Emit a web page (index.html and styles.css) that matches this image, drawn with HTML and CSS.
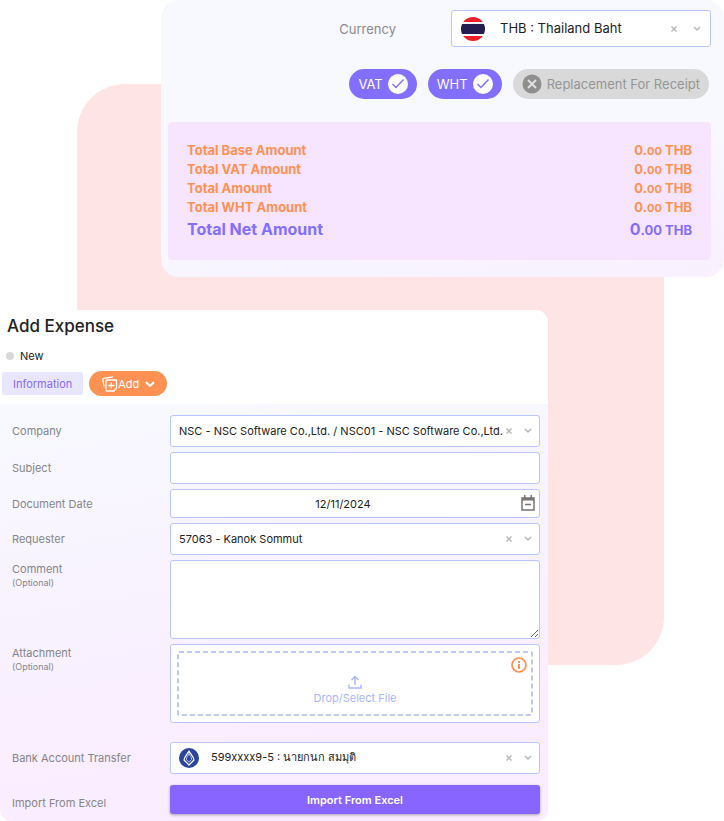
FILE: index.html
```html
<!DOCTYPE html>
<html lang="en">
<head>
<meta charset="utf-8">
<meta name="viewport" content="width=device-width, initial-scale=1">
<title>Add Expense</title>
<link rel="stylesheet" href="styles.css">
</head>
<body>
<main class="stage">
  <div class="backdrop"></div>

  <section class="summary">
    <div class="currency">
      <label class="currency-label" for="currency">Currency</label>
      <div class="picker picker-large">
        <svg class="picker-icon" viewBox="0 0 24 24" aria-hidden="true">
          <defs><clipPath id="round"><circle cx="12" cy="12" r="12"/></clipPath></defs>
          <g clip-path="url(#round)">
            <rect width="24" height="24" fill="#f7f7fa"/>
            <rect width="24" height="5" fill="#ee2027"/>
            <rect y="7" width="24" height="10" fill="#241d4f"/>
            <rect y="19" width="24" height="5" fill="#ee2027"/>
          </g>
        </svg>
        <select class="control" id="currency"><option>THB : Thailand Baht</option></select>
        <button class="clear" type="button" aria-label="Clear currency"><svg viewBox="0 0 6 6"><path d="M.5.5l5 5M5.500.500l-5 5"/></svg></button>
        <svg class="chevron" viewBox="0 0 8 6" aria-hidden="true"><path d="M1 1l3 3 3-3"/></svg>
      </div>
    </div>

    <div class="toggles">
      <button class="toggle" type="button" aria-pressed="true">VAT
        <svg viewBox="0 0 20 20" aria-hidden="true"><circle cx="10" cy="10" r="10" fill="#fff"/><path d="M4.500 10l3.500 3.500 7.500-8" fill="none" stroke="#836fff" stroke-width="1.500"/></svg>
      </button>
      <button class="toggle" type="button" aria-pressed="true">WHT
        <svg viewBox="0 0 20 20" aria-hidden="true"><circle cx="10" cy="10" r="10" fill="#fff"/><path d="M4.500 10l3.500 3.500 7.500-8" fill="none" stroke="#836fff" stroke-width="1.500"/></svg>
      </button>
      <button class="toggle toggle-off" type="button" aria-pressed="false">
        <svg viewBox="0 0 20 20" aria-hidden="true"><circle cx="10" cy="10" r="9.500" fill="#8f8f8f"/><path d="M6 6l8 8M14 6l-8 8" fill="none" stroke="#e4e4e4" stroke-width="1.800"/></svg>
        Replacement For Receipt
      </button>
    </div>

    <dl class="totals">
      <div class="total"><dt>Total Base Amount</dt><dd>0.<small>00</small> THB</dd></div>
      <div class="total"><dt>Total VAT Amount</dt><dd>0.<small>00</small> THB</dd></div>
      <div class="total"><dt>Total Amount</dt><dd>0.<small>00</small> THB</dd></div>
      <div class="total"><dt>Total WHT Amount</dt><dd>0.<small>00</small> THB</dd></div>
      <div class="total net"><dt>Total Net Amount</dt><dd>0<small>.00 THB</small></dd></div>
    </dl>
  </section>

  <section class="expense">
    <header class="head">
      <h1>Add Expense</h1>
      <p class="status">New</p>
      <div class="tabs">
        <button class="tab" type="button">Information</button>
        <button class="add" type="button">
          <svg class="add-icon" viewBox="0 0 16 16" aria-hidden="true"><path d="M5 4h9.500v8L12 15H5c-.7 0-1-.4-1-1V5c0-.6.3-1 1-1zM9.300 6.500v6M6.300 9.500h6M2 10.500L.8 3.500c-.1-.7.200-1.100.8-1.200L11 .8"/></svg>
          Add
          <svg class="add-arrow" viewBox="0 0 10 6" aria-hidden="true"><path d="M1 1l4 4 4-4"/></svg>
        </button>
      </div>
    </header>

    <form class="form">
      <div class="row">
        <label for="company">Company</label>
        <div class="picker">
          <select class="control" id="company"><option>NSC - NSC Software Co.,Ltd. / NSC01 - NSC Software Co.,Ltd.</option></select>
          <button class="clear" type="button" aria-label="Clear company"><svg viewBox="0 0 6 6"><path d="M.5.5l5 5M5.500.500l-5 5"/></svg></button>
          <svg class="chevron" viewBox="0 0 8 6" aria-hidden="true"><path d="M1 1l3 3 3-3"/></svg>
        </div>
      </div>
      <div class="row">
        <label for="subject">Subject</label>
        <input class="control" id="subject" type="text">
      </div>
      <div class="row">
        <label for="date">Document Date</label>
        <div class="date">
          <input class="control" id="date" type="text" value="12/11/2024">
          <button class="calendar" type="button" aria-label="Open calendar">
            <svg viewBox="0 0 14 16"><path d="M1 3h12v12H1z" fill="none" stroke="#77736f" stroke-width="1.500"/><path d="M1 3h12v2.500H1zM3 0h1.500v3H3zM9.500 0H11v3H9.500z" fill="#77736f"/><path d="M4 9.500h6" stroke="#77736f" stroke-width="1.500"/></svg>
          </button>
        </div>
      </div>
      <div class="row">
        <label for="requester">Requester</label>
        <div class="picker">
          <select class="control" id="requester"><option>57063 - Kanok Sommut</option></select>
          <button class="clear" type="button" aria-label="Clear requester"><svg viewBox="0 0 6 6"><path d="M.5.5l5 5M5.500.500l-5 5"/></svg></button>
          <svg class="chevron" viewBox="0 0 8 6" aria-hidden="true"><path d="M1 1l3 3 3-3"/></svg>
        </div>
      </div>
      <div class="row row-tall">
        <label for="comment">Comment<small>(Optional)</small></label>
        <textarea class="control" id="comment"></textarea>
      </div>
      <div class="row row-tall">
        <label for="file">Attachment<small>(Optional)</small></label>
        <div class="attach">
          <label class="drop" for="file">
            <svg class="dashes" aria-hidden="true"><rect x="1" y="1" rx="1"/></svg>
            <svg class="upload" viewBox="0 0 14 14" aria-hidden="true"><path d="M7 10V2M3.500 5L7 1.500 10.500 5M1 9.500V13h12V9.500"/></svg>
            Drop/Select File
          </label>
          <input class="file" id="file" type="file">
          <button class="info" type="button" aria-label="Attachment information">
            <svg viewBox="0 0 16 16"><circle cx="8" cy="8" r="7" fill="none" stroke="#ff9152" stroke-width="1.700"/><path d="M7 7h2v5H7zM7 4h2v2H7z" fill="#ff9152"/></svg>
          </button>
        </div>
      </div>
      <div class="row row-bank">
        <label for="bank">Bank Account Transfer</label>
        <div class="picker picker-bank">
          <svg class="picker-icon" viewBox="0 0 20 20" aria-hidden="true"><circle cx="10" cy="10" r="10" fill="#2b459c"/><path d="M10 3C8.500 6 5.500 8.500 5 12l5 5 5-5c-.5-3.500-3.500-6-5-9z" fill="none" stroke="#fff" stroke-width="1.200" stroke-linejoin="round"/><path d="M10 5.500C9 8 7.500 9 7.300 11.300L10 14.300l2.700-3C12.500 9 11 8 10 5.500z" fill="none" stroke="#dfe5f7" stroke-width=".8"/></svg>
          <select class="control" id="bank"><option>599xxxx9-5 : นายกนก สมมุติ</option></select>
          <button class="clear" type="button" aria-label="Clear bank account"><svg viewBox="0 0 6 6"><path d="M.5.5l5 5M5.500.500l-5 5"/></svg></button>
          <svg class="chevron" viewBox="0 0 8 6" aria-hidden="true"><path d="M1 1l3 3 3-3"/></svg>
        </div>
      </div>
      <div class="row row-import">
        <label for="import">Import From Excel</label>
        <button class="import" id="import" type="button">Import From Excel</button>
      </div>
    </form>
  </section>
</main>
</body>
</html>
```

FILE: styles.css
```css
* { box-sizing: border-box; }

body {
  margin: 0;
  background: #fff;
  color: #222;
  font: 11px/16px Inter, "Noto Sans", sans-serif;
}

button, input, select, textarea { font: inherit; color: inherit; }
button { border: 0; padding: 0; background: none; cursor: pointer; }

.stage {
  position: relative;
  display: flex;
  flex-direction: column;
  gap: 33px;
}

.backdrop {
  position: absolute;
  inset: 84px 60px 156px 77px;
  border-radius: 48px;
  background: #ffe4e5;
}

/* Amount summary */
.summary {
  position: relative;
  margin-left: 161px;
  padding: 10px 13px 17px 7px;
  border-radius: 18px;
  background: linear-gradient(170deg, #f8f9ff 55%, #f7f4ff 80%, #faf0ff);
}

.currency {
  display: flex;
  justify-content: flex-end;
  align-items: center;
  gap: 55px;
}

.currency-label { color: #8b8b8f; font-size: 13px; }

.toggles {
  display: flex;
  justify-content: flex-end;
  gap: 11px;
  margin: 22px 2px 23px 0;
}

.toggle {
  display: flex;
  align-items: center;
  gap: 5px;
  height: 30px;
  padding: 0 9px;
  border-radius: 15px;
  background: #836fff;
  color: #fff;
  font-size: 13px;
}

.toggle svg { width: 20px; height: 20px; }
.toggle-off { background: #d9d9d9; color: #959595; }

.totals {
  margin: 0;
  padding: 19px;
  border-radius: 4px;
  background: #f7e5ff;
  color: #ff9152;
  font-size: 13px;
  font-weight: 700;
  line-height: 19px;
}

.total { display: flex; justify-content: space-between; }
.total dd { margin: 0; }
.total small { font-size: 11px; line-height: 1; }
.net { color: #836fff; font-size: 16px; line-height: 24px; }
.total.net small { font-size: 13px; }

/* Select with clear button and chevron */
.control {
  display: block;
  width: 100%;
  height: 32px;
  padding: 0 8px;
  border: 1px solid #b9c5ff;
  border-radius: 3px;
  background: #fff;
  outline: 0;
  appearance: none;
}

.picker { position: relative; }
.picker .control { padding-right: 34px; }
.picker-large { width: 260px; }
.picker-large .control { height: 37px; padding-left: 48px; padding-bottom: 2px; font-size: 13px; }
.picker-bank .control { padding-left: 40px; padding-bottom: 2px; }
.picker-icon { position: absolute; left: 9px; top: 6px; width: 20px; height: 20px; }
.picker-large .picker-icon { left: 10px; top: 7px; width: 24px; height: 24px; }

.clear {
  position: absolute;
  right: 28px;
  top: calc(50% - 3px);
  width: 6px;
  height: 6px;
}

.clear svg { display: block; }
.chevron {
  position: absolute;
  right: 8px;
  top: calc(50% - 3px);
  width: 8px;
  height: 6px;
}
.picker-large .clear { right: 34px; }
.picker-large .chevron { right: 10px; }
.clear path, .chevron path { fill: none; stroke: #b8b8b8; stroke-width: 1.5; }

/* Expense form */
.expense {
  position: relative;
  margin-right: 176px;
  border-radius: 0 12px 12px 12px;
  background: #fff;
  overflow: hidden;
}

.head { padding: 5px 2px 8px; }
h1 { margin: 0 5px; font-size: 17px; line-height: 22px; font-weight: 500; }

.status {
  display: flex;
  align-items: center;
  gap: 6px;
  margin: 11px 4px 7px;
}

.status::before {
  content: "";
  width: 8px;
  height: 8px;
  border-radius: 50%;
  background: #d9d9d9;
}

.tabs { display: flex; align-items: center; gap: 6px; }

.tab {
  height: 23px;
  padding: 0 11px;
  border-radius: 2px;
  background: #e9e7ff;
  color: #8b68ff;
}

.add {
  display: flex;
  align-items: center;
  height: 25px;
  padding: 0 12px 0 13px;
  border-radius: 13px;
  background: #ff9152;
  color: #fff;
}

.add-icon { width: 16px; height: 16px; }
.add-icon path { fill: none; stroke: #fff; stroke-width: 1.3; stroke-linejoin: round; }
.add-arrow { width: 10px; height: 6px; margin-left: 6px; }
.add-arrow path { fill: none; stroke: #fff; stroke-width: 2; }

.form {
  display: flex;
  flex-direction: column;
  gap: 5px;
  padding: 11px 8px 7px 12px;
  background: linear-gradient(170deg, #f8f9ff, #f8f3ff 40%, #faedff 75%);
}

.row {
  display: grid;
  grid-template-columns: 158px 1fr;
  align-items: center;
}

.row > label { color: #858589; }
.row small { display: block; font-size: 9px; line-height: 12px; }
.row-tall { align-items: start; }
.row-tall > label { padding-top: 1px; }
.row-bank { margin-top: 14px; }
.row-import { margin-top: 6px; }
.row-import > label { padding-top: 6px; }

textarea.control { height: 79px; resize: vertical; }

.date { position: relative; }
.date .control { height: 29px; padding: 0 32px 0 8px; text-align: center; }
.calendar { position: absolute; right: 5px; top: 6px; width: 14px; height: 16px; }
.calendar svg { display: block; }

.attach {
  position: relative;
  padding: 6px;
  border: 1px solid #b9c5ff;
  border-radius: 3px;
  background: #fff;
}

.drop {
  position: relative;
  display: flex;
  flex-direction: column;
  align-items: center;
  justify-content: flex-end;
  gap: 1px;
  height: 65px;
  padding-bottom: 10px;
  color: #a9b6ff;
}

.dashes { position: absolute; inset: 0; width: 100%; height: 100%; }
.dashes rect {
  width: calc(100% - 2px);
  height: calc(100% - 2px);
  fill: none;
  stroke: #a9b6f5;
  stroke-width: 1.5;
  stroke-dasharray: 5 3;
}

.upload { width: 14px; height: 14px; }
.upload path { fill: none; stroke: #a9b6ff; stroke-width: 1.4; }
.file { position: absolute; width: 1px; height: 1px; opacity: 0; }
.info { position: absolute; right: 12px; top: 12px; width: 16px; height: 16px; }
.info svg { display: block; }

.import {
  height: 29px;
  border-radius: 3px;
  background: #8965ff;
  box-shadow: 0 1px 3px #0005;
  color: #fff;
  font-size: 11px;
  font-weight: 600;
}
```
